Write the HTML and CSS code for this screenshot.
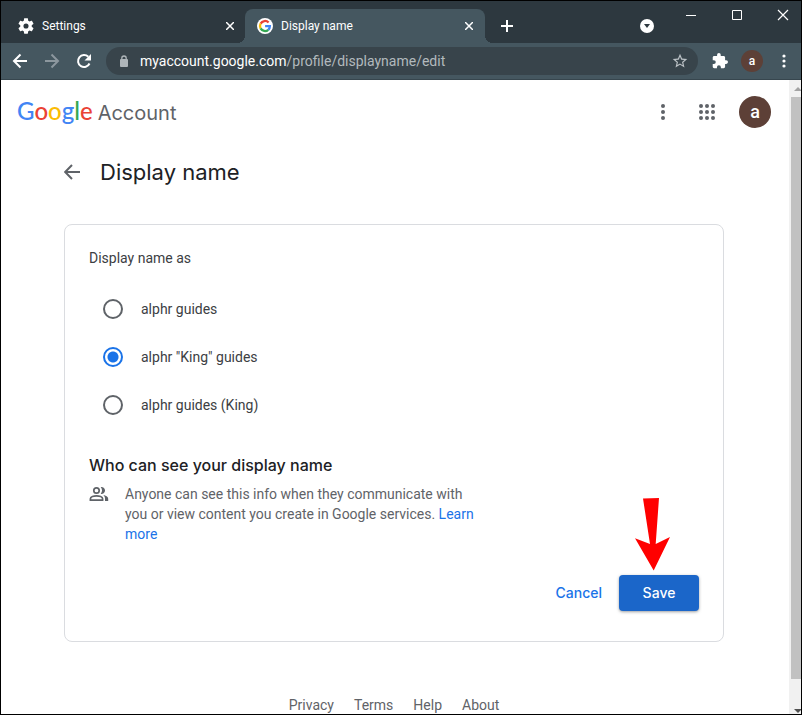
FILE: index.html
```
<!doctype html>
<html lang="en">
<head>
	<meta charset="utf-8">
	<title>Display name</title>
	<meta name="viewport" content="width=device-width, initial-scale=1">
	<link rel="stylesheet" href="styles.css">
</head>
<body>

<div class="window">

	<div class="titlebar">
		<div class="tabs">
			<div class="tab">
				<svg class="tab-icon" width="16" height="16" viewBox="2 2 20 20"><path fill="#fff" fill-rule="evenodd" d="M19.14 12.94c.04-.3.06-.61.06-.94s-.02-.64-.07-.94l2.03-1.58c.18-.14.23-.41.12-.61l-1.92-3.32c-.12-.22-.37-.29-.59-.22l-2.39.96c-.5-.38-1.03-.7-1.62-.94l-.36-2.54c-.04-.24-.24-.41-.48-.41h-3.84c-.24 0-.43.17-.47.41l-.36 2.54c-.59.24-1.13.57-1.62.94l-2.39-.96c-.22-.08-.47 0-.59.22L2.74 8.87c-.12.21-.08.47.12.61l2.03 1.58c-.05.3-.09.63-.09.94s.02.64.07.94l-2.03 1.58c-.18.14-.23.41-.12.61l1.92 3.32c.12.22.37.29.59.22l2.39-.96c.5.38 1.03.7 1.62.94l.36 2.54c.05.24.24.41.48.41h3.84c.24 0 .44-.17.47-.41l.36-2.54c.59-.24 1.13-.56 1.62-.94l2.39.96c.22.08.47 0 .59-.22l1.92-3.32c.12-.22.07-.47-.12-.61l-2.01-1.58zM12 15.2a3.2 3.2 0 1 1 0-6.4 3.2 3.2 0 0 1 0 6.4z"/></svg>
				<span class="tab-title">Settings</span>
				<button class="tab-close" aria-label="Close tab"><svg width="8" height="8" viewBox="0 0 8 8"><path d="M0 0l8 8M8 0L0 8" stroke="#fff" stroke-width="1.5"/></svg></button>
			</div>
			<div class="tab active">
				<svg class="tab-icon" width="16" height="16" viewBox="0 0 16 16"><circle cx="8" cy="8" r="8" fill="#fff"/><g fill="none" stroke-width="2.3"><path stroke="#ea4335" d="M3.6 5.6A5 5 0 0 1 11.6 4.5"/><path stroke="#fbbc05" d="M3.6 5.6a5 5 0 0 0 0 4.8"/><path stroke="#34a853" d="M3.6 10.4a5 5 0 0 0 7.7 1.4"/><path stroke="#4285f4" d="M11.3 11.8A4.9 4.9 0 0 0 12.9 8.1H8.1"/></g></svg>
				<span class="tab-title">Display name</span>
				<button class="tab-close" aria-label="Close tab"><svg width="8" height="8" viewBox="0 0 8 8"><path d="M0 0l8 8M8 0L0 8" stroke="#fff" stroke-width="1.5"/></svg></button>
			</div>
			<button class="new-tab" aria-label="New tab"><svg width="12" height="12" viewBox="0 0 12 12"><path d="M6 0v12M0 6h12" stroke="#fff" stroke-width="2"/></svg></button>
		</div>
		<button class="tab-search" aria-label="Search tabs"><svg width="14" height="14" viewBox="0 0 14 14"><circle cx="7" cy="7" r="7" fill="#fff"/><path fill="#2d383f" d="M4 5h6L7 9z"/></svg></button>
		<div class="window-controls">
			<button aria-label="Minimize"><svg width="12" height="12" viewBox="0 0 12 12"><path d="M1 6.500h10" stroke="#fff"/></svg></button>
			<button aria-label="Maximize"><svg width="12" height="12" viewBox="0 0 12 12"><path d="M1.500 1.500h9v9h-9z" fill="none" stroke="#fff"/></svg></button>
			<button aria-label="Close"><svg width="12" height="12" viewBox="0 0 12 12"><path d="M1 1l10 10M11 1L1 11" stroke="#fff" stroke-width="1.2"/></svg></button>
		</div>
	</div>

	<div class="toolbar">
		<button aria-label="Back"><svg width="16" height="16" viewBox="0 0 16 16"><path d="M15 8H2M8.500 1.500L2 8l6.500 6.500" fill="none" stroke="#fff" stroke-width="2"/></svg></button>
		<button aria-label="Forward"><svg width="16" height="16" viewBox="0 0 16 16"><path d="M1 8h13M7.500 1.500L14 8l-6.500 6.500" fill="none" stroke="#8c979e" stroke-width="2"/></svg></button>
		<button aria-label="Reload"><svg width="16" height="16" viewBox="0 0 16 16"><path d="M13.500 10.500A6 6 0 1 1 12.300 3.800" fill="none" stroke="#fff" stroke-width="2"/><path fill="#fff" d="M15 1v6.500H8.500z"/></svg></button>
		<div class="address">
			<svg width="10" height="12" viewBox="0 0 10 12"><rect x="1" y="4" width="8" height="8" rx="1" fill="#aeb5b9"/><path d="M2.800 5V3.200a2.200 2.200 0 0 1 4.400 0V5" fill="none" stroke="#aeb5b9" stroke-width="1.300"/></svg>
			<span class="url"><b>myaccount.google.com</b>/profile/displayname/edit</span>
			<button class="star" aria-label="Bookmark"><svg width="16" height="16" viewBox="1 1 22 22"><path fill="#bcc2c6" d="M22 9.240l-7.190-.620L12 2 9.190 8.630 2 9.240l5.460 4.730L5.820 21 12 17.270 18.180 21l-1.630-7.030L22 9.240zM12 15.400l-3.760 2.270 1-4.280-3.320-2.880 4.380-.380L12 6.100l1.710 4.040 4.380.380-3.320 2.880 1 4.280L12 15.400z"/></svg></button>
		</div>
		<button class="extensions" aria-label="Extensions"><svg width="16" height="16" viewBox="1 1 22 22"><path fill="#fff" d="M20.500 11H19V7c0-1.100-.900-2-2-2h-4V3.500a2.500 2.500 0 0 0-5 0V5H4c-1.100 0-1.990.900-1.990 2v3.800H3.500a2.700 2.700 0 0 1 0 5.400H2V20c0 1.100.900 2 2 2h3.800v-1.500a2.700 2.700 0 0 1 5.400 0V22H17c1.100 0 2-.900 2-2v-4h1.500a2.500 2.500 0 0 0 0-5z"/></svg></button>
		<button class="avatar">a</button>
		<button class="menu" aria-label="Menu"><svg width="4" height="14" viewBox="0 0 4 14"><g fill="#fff"><circle cx="2" cy="2" r="1.600"/><circle cx="2" cy="7" r="1.600"/><circle cx="2" cy="12" r="1.600"/></g></svg></button>
	</div>

	<div class="viewport">
		<div class="page">
			<header class="page-header">
				<a class="logo" href="#"><span class="google"><span class="blue">G</span><span class="red">o</span><span class="yellow">o</span><span class="blue">g</span><span class="green">l</span><span class="red">e</span></span><span>Account</span></a>
				<button aria-label="More"><svg width="4" height="16" viewBox="0 0 4 16"><g fill="#5f6368"><circle cx="2" cy="2" r="2"/><circle cx="2" cy="8" r="2"/><circle cx="2" cy="14" r="2"/></g></svg></button>
				<button aria-label="Google apps"><svg width="16" height="16" viewBox="0 0 16 16"><g fill="#5f6368"><circle cx="2" cy="2" r="2"/><circle cx="8" cy="2" r="2"/><circle cx="14" cy="2" r="2"/><circle cx="2" cy="8" r="2"/><circle cx="8" cy="8" r="2"/><circle cx="14" cy="8" r="2"/><circle cx="2" cy="14" r="2"/><circle cx="8" cy="14" r="2"/><circle cx="14" cy="14" r="2"/></g></svg></button>
				<button class="avatar">a</button>
			</header>

			<main>
				<div class="heading">
					<a href="#" aria-label="Back"><svg width="16" height="16" viewBox="0 0 16 16"><path d="M16 8H1.500M8 1L1.200 8 8 15" fill="none" stroke="#5f6368" stroke-width="2"/></svg></a>
					<h1>Display name</h1>
				</div>

				<form class="card">
					<fieldset>
						<legend>Display name as</legend>
						<label><input type="radio" name="display">alphr guides</label>
						<label><input type="radio" name="display" checked>alphr "King" guides</label>
						<label><input type="radio" name="display">alphr guides (King)</label>
					</fieldset>

					<h2>Who can see your display name</h2>
					<div class="info">
						<svg width="20" height="20" viewBox="0 0 20 20"><g fill="none" stroke="#5f6368" stroke-width="1.700"><circle cx="7.500" cy="6.500" r="2.700"/><path d="M1.400 16.200v-1.500c0-1.900 3.500-2.900 6.100-2.900s6.100 1 6.100 2.900v1.500z"/></g><path fill="#5f6368" d="M11.700 3.100a3.500 3.500 0 1 1 0 6.800 5.500 5.500 0 0 0 0-6.800zM14.300 11.100c2.300.4 4.900 1.600 4.900 3.600V17h-3.200v-2.300c0-1.500-.7-2.700-1.700-3.600z"/></svg>
						<p>Anyone can see this info when they communicate with you or view content you create in Google services. <a href="#">Learn more</a></p>
					</div>

					<div class="actions">
						<button type="button" class="cancel">Cancel</button>
						<button type="button" class="save">Save</button>
						<svg class="pointer" width="36" height="74" viewBox="0 0 36 74"><path fill="#f00" d="M8 1.500L24 1l-3.300 46L35 40 18.700 73.500 0 41.300 15 47z"/></svg>
					</div>
				</form>
			</main>

			<footer>
				<a href="#">Privacy</a>
				<a href="#">Terms</a>
				<a href="#">Help</a>
				<a href="#">About</a>
			</footer>
		</div>

		<div class="scrollbar">
			<svg width="10" height="17" viewBox="0 0 10 17"><path fill="#a3a3a3" d="M3 11l4-4 4 4z"/></svg>
			<div class="thumb"></div>
			<svg width="10" height="17" viewBox="0 0 10 17"><path fill="#505050" d="M3 12l4 4 4-4z"/></svg>
		</div>
	</div>

</div>

</body>
</html>
```
FILE: styles.css
```
* {
	box-sizing: border-box;
}
body {
	margin: 0;
	font-family: Roboto, Arial, sans-serif;
	font-size: 14px;
	line-height: 20px;
	color: #3c4043;
	background: #fff;
}
button {
	display: flex;
	align-items: center;
	justify-content: center;
	padding: 0;
	border: 0;
	background: none;
	font: inherit;
	color: inherit;
	cursor: pointer;
}
svg {
	display: block;
	flex: none;
}
a {
	color: #1a73e8;
	text-decoration: none;
}
.window {
	display: flex;
	flex-direction: column;
	height: 100vh;
	border: 1px solid #000;
	overflow: hidden;
}

/* browser tabs */
.titlebar {
	display: flex;
	align-items: flex-start;
	height: 42px;
	flex: none;
	background: #2d383f;
	color: #fff;
	font-size: 12px;
}
.tabs {
	display: flex;
	flex: 1;
	padding: 8px 0 0 4px;
}
.tab {
	display: flex;
	align-items: center;
	width: 240px;
	height: 34px;
	padding: 0 11px 0 13px;
	border-radius: 8px 8px 0 0;
}
.tab.active {
	position: relative;
	padding: 0 12px;
	background: #455760;
}
/* flared feet of the active tab */
.tab.active::before,
.tab.active::after {
	content: "";
	position: absolute;
	bottom: 0;
	width: 8px;
	height: 8px;
}
.tab.active::before {
	right: 100%;
	background: radial-gradient(circle at 0 0, transparent 8px, #455760 8px);
}
.tab.active::after {
	left: 100%;
	background: radial-gradient(circle at 100% 0, transparent 8px, #455760 8px);
}
.tab-icon {
	margin-right: 8px;
}
.tab-title {
	flex: 1;
}
.new-tab {
	width: 44px;
	height: 34px;
}
.tab-search {
	width: 42px;
	height: 34px;
	margin-top: 8px;
}
.window-controls {
	display: flex;
	margin-right: -5px;
}
.window-controls button {
	width: 46px;
	height: 28px;
}

/* address bar */
.toolbar {
	display: flex;
	align-items: center;
	height: 37px;
	flex: none;
	padding: 0 0 0 3px;
	border-bottom: 1px solid #37464e;
	background: #455760;
	color: #fff;
}
.toolbar button {
	width: 32px;
}
.address {
	display: flex;
	align-items: center;
	flex: 1;
	height: 28px;
	margin-left: 6px;
	padding: 0 2px 0 13px;
	border-radius: 14px;
	background: #38444b;
}
.url {
	flex: 1;
	margin-left: 11px;
	color: #b2b9bd;
	white-space: nowrap;
}
.url b {
	font-weight: 400;
	color: #fff;
}
.toolbar .extensions {
	width: 43px;
}
.avatar {
	width: 32px;
	height: 32px;
	border-radius: 50%;
	background: #5d4037;
	color: #fff;
	font-size: 18px;
	font-weight: 500;
}
.toolbar .avatar {
	width: 22px;
	height: 22px;
	font-size: 12px;
}
.toolbar .menu {
	width: 38px;
	padding-left: 4px;
}

/* page */
.viewport {
	display: flex;
	flex: 1;
	min-height: 0;
}
.page {
	flex: 1;
	padding-right: 2px;
	overflow: hidden;
}
.page-header {
	display: flex;
	align-items: center;
	height: 64px;
	padding: 0 16px;
}
.page-header button {
	width: 44px;
}
.page-header .avatar {
	width: 32px;
	margin-left: 10px;
}
.logo {
	display: flex;
	align-items: baseline;
	gap: 5px;
	flex: 1;
	font-family: "Google Sans", Inter, sans-serif;
	font-size: 20px;
	line-height: 28px;
	color: #5f6368;
}
.google {
	font-family: "Product Sans", Lato, sans-serif;
	font-size: 24px;
	font-weight: 500;
}
.blue { color: #4285f4; }
.red { color: #ea4335; }
.yellow { color: #fbbc05; }
.green { color: #34a853; }

main {
	max-width: 660px;
	margin: 0 auto;
}
.heading {
	display: flex;
	align-items: center;
	gap: 20px;
	padding: 12px 0 36px;
}
h1, h2 {
	margin: 0;
	font-family: "Google Sans", Inter, sans-serif;
	font-weight: 400;
	color: #202124;
}
h1 {
	font-size: 22px;
	line-height: 32px;
}
.card {
	padding: 23px 24px 30px;
	border: 1px solid #dadce0;
	border-radius: 8px;
}
fieldset {
	margin: 0;
	padding: 0;
	border: 0;
}
legend {
	padding: 0;
	margin-bottom: 17px;
}
label {
	display: flex;
	align-items: center;
	height: 48px;
	padding-left: 14px;
}
input[type="radio"] {
	appearance: none;
	width: 20px;
	height: 20px;
	margin: 0 18px 0 0;
	border: 2px solid #5f6368;
	border-radius: 50%;
}
input[type="radio"]:checked {
	border-color: #1a73e8;
	background: radial-gradient(circle, #1a73e8 5px, transparent 6px);
}
h2 {
	margin: 24px 0 7px;
	font-size: 16px;
	font-weight: 500;
	line-height: 24px;
}
.info {
	display: flex;
	gap: 16px;
	max-width: 396px;
	color: #5f6368;
}
.info p {
	margin: 0;
}
.actions {
	display: flex;
	justify-content: flex-end;
	position: relative;
	margin-top: 31px;
	font-family: "Google Sans", Inter, sans-serif;
	font-weight: 500;
}
.cancel {
	padding: 0 17px;
	color: #1a73e8;
}
.save {
	width: 80px;
	height: 36px;
	border-radius: 4px;
	background: #1b66c9;
	color: #fff;
	box-shadow: 0 1px 3px rgba(60, 64, 67, 0.5);
}
.pointer {
	position: absolute;
	right: 28px;
	bottom: 40px;
}
footer {
	display: flex;
	justify-content: center;
	gap: 20px;
	padding-top: 53px;
}
footer a {
	color: #5f6368;
}

.scrollbar {
	display: flex;
	flex-direction: column;
	align-items: flex-end;
	width: 12px;
	background: #f1f1f1;
}
.thumb {
	width: 10px;
	flex: 1;
	margin-bottom: 18px;
	background: #c1c1c1;
}
```
